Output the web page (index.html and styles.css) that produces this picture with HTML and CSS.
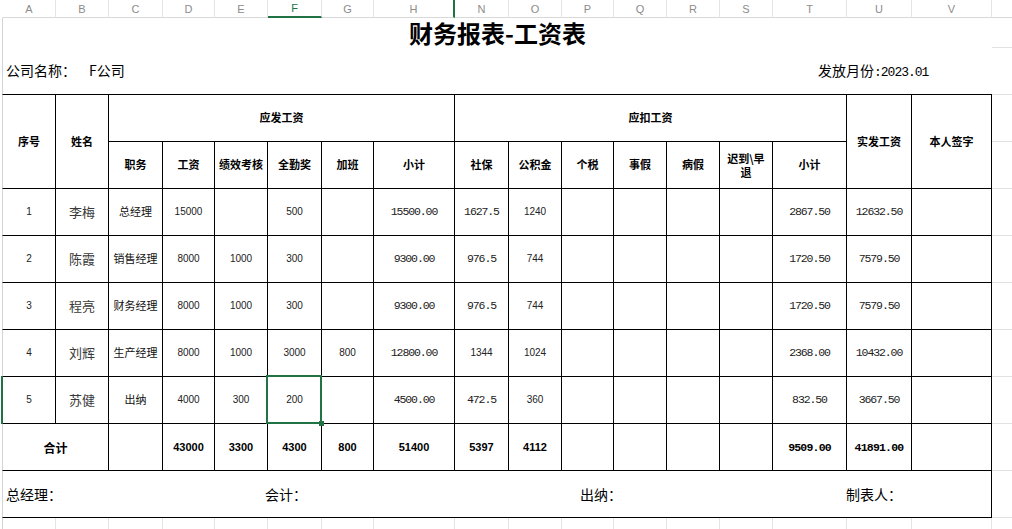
FILE: index.html
```html
<!DOCTYPE html>
<html lang="zh-CN">
<head>
<meta charset="utf-8">
<title>财务报表-工资表</title>
<link rel="stylesheet" href="styles.css">
</head>
<body>
<table class="sheet">
  <colgroup>
    <col class="w54"><col class="w53"><col class="w54"><col class="w52"><col class="w53"><col class="w54"><col class="w52"><col class="w81">
    <col class="w54"><col class="w53"><col class="w52"><col class="w53"><col class="w53"><col class="w53"><col class="w74"><col class="w65"><col class="w80"><col class="wfill">
  </colgroup>
  <thead>
    <tr class="colhead">
      <th class="first">A</th><th>B</th><th>C</th><th>D</th><th>E</th><th class="sel">F</th><th>G</th><th class="hid">H</th>
      <th>N</th><th>O</th><th>P</th><th>Q</th><th>R</th><th>S</th><th>T</th><th>U</th><th>V</th><th class="fill"></th>
    </tr>
  </thead>
  <tbody>
    <tr class="r-title">
      <td colspan="17" class="first title">财务报表-工资表</td><td class="fill"></td>
    </tr>
    <tr class="r-row">
      <td colspan="17" class="first company">
        <div class="meta">
          <span>公司名称：</span><span>F公司</span><span>发放月份<span class="mono">:2023.01</span></span>
        </div>
      </td><td class="fill"></td>
    </tr>
    <tr class="r-row hd">
      <td rowspan="2" class="first k">序号</td>
      <td rowspan="2" class="k">姓名</td>
      <td colspan="6" class="k">应发工资</td>
      <td colspan="7" class="k">应扣工资</td>
      <td rowspan="2" class="k">实发工资</td>
      <td rowspan="2" class="k">本人签字</td>
      <td class="fill"></td>
    </tr>
    <tr class="r-row hd">
      <td class="k">职务</td><td class="k">工资</td><td class="k">绩效考核</td><td class="k">全勤奖</td><td class="k">加班</td><td class="k">小计</td>
      <td class="k">社保</td><td class="k">公积金</td><td class="k">个税</td><td class="k">事假</td><td class="k">病假</td><td class="k wrap">迟到\早<br>退</td><td class="k">小计</td>
      <td class="fill"></td>
    </tr>
    <tr class="r-row">
      <td class="first k n">1</td><td class="k nm">李梅</td><td class="k tx">总经理</td><td class="k n">15000</td><td class="k"></td><td class="k n">500</td><td class="k"></td><td class="k d">15500.00</td>
      <td class="k d">1627.5</td><td class="k n">1240</td><td class="k"></td><td class="k"></td><td class="k"></td><td class="k"></td><td class="k d">2867.50</td><td class="k d">12632.50</td><td class="k"></td>
      <td class="fill"></td>
    </tr>
    <tr class="r-row">
      <td class="first k n">2</td><td class="k nm">陈霞</td><td class="k tx">销售经理</td><td class="k n">8000</td><td class="k n">1000</td><td class="k n">300</td><td class="k"></td><td class="k d">9300.00</td>
      <td class="k d">976.5</td><td class="k n">744</td><td class="k"></td><td class="k"></td><td class="k"></td><td class="k"></td><td class="k d">1720.50</td><td class="k d">7579.50</td><td class="k"></td>
      <td class="fill"></td>
    </tr>
    <tr class="r-row">
      <td class="first k n">3</td><td class="k nm">程亮</td><td class="k tx">财务经理</td><td class="k n">8000</td><td class="k n">1000</td><td class="k n">300</td><td class="k"></td><td class="k d">9300.00</td>
      <td class="k d">976.5</td><td class="k n">744</td><td class="k"></td><td class="k"></td><td class="k"></td><td class="k"></td><td class="k d">1720.50</td><td class="k d">7579.50</td><td class="k"></td>
      <td class="fill"></td>
    </tr>
    <tr class="r-row">
      <td class="first k n">4</td><td class="k nm">刘辉</td><td class="k tx">生产经理</td><td class="k n">8000</td><td class="k n">1000</td><td class="k n">3000</td><td class="k n">800</td><td class="k d">12800.00</td>
      <td class="k n">1344</td><td class="k n">1024</td><td class="k"></td><td class="k"></td><td class="k"></td><td class="k"></td><td class="k d">2368.00</td><td class="k d">10432.00</td><td class="k"></td>
      <td class="fill"></td>
    </tr>
    <tr class="r-row">
      <td class="first k n rowmark">5</td><td class="k nm">苏健</td><td class="k tx">出纳</td><td class="k n">4000</td><td class="k n">300</td><td class="k n cur">200</td><td class="k"></td><td class="k d">4500.00</td>
      <td class="k d">472.5</td><td class="k n">360</td><td class="k"></td><td class="k"></td><td class="k"></td><td class="k"></td><td class="k d">832.50</td><td class="k d">3667.50</td><td class="k"></td>
      <td class="fill"></td>
    </tr>
    <tr class="r-row tot">
      <td colspan="2" class="first k tcj">合计</td><td class="k"></td><td class="k">43000</td><td class="k">3300</td><td class="k">4300</td><td class="k">800</td><td class="k">51400</td>
      <td class="k">5397</td><td class="k">4112</td><td class="k"></td><td class="k"></td><td class="k"></td><td class="k"></td><td class="k td">9509.00</td><td class="k td">41891.00</td><td class="k"></td>
      <td class="fill"></td>
    </tr>
    <tr class="r-row">
      <td colspan="17" class="first k footer">
        <div class="sign">
          <span>总经理：</span><span>会计：</span><span>出纳：</span><span>制表人：</span>
        </div>
      </td>
      <td class="fill"></td>
    </tr>
    <tr class="r-below">
      <td class="first g"></td><td class="g"></td><td class="g"></td><td class="g"></td><td class="g"></td><td class="g"></td><td class="g"></td><td class="g"></td>
      <td class="g"></td><td class="g"></td><td class="g"></td><td class="g"></td><td class="g"></td><td class="g"></td><td class="g"></td><td class="g"></td><td class="g"></td><td></td>
    </tr>
  </tbody>
</table>
</body>
</html>
```

FILE: styles.css
```css
* { box-sizing: border-box; }
html, body { margin: 0; padding: 0; background: #fff; }
body {
  overflow: hidden;
  height: 529px;
  font-family: "Noto Sans CJK SC", "Liberation Sans", sans-serif;
  color: #000;
}

.sheet {
  border-collapse: separate;
  border-spacing: 0;
  table-layout: fixed;
  width: 1010px;
  margin-left: 2px;
}
.w54 { width: 54px; } .w53 { width: 53px; } .w52 { width: 52px; }
.w81 { width: 81px; } .w74 { width: 74px; } .w65 { width: 65px; }
.w80 { width: 80px; } .wfill { width: 20px; }

.sheet td, .sheet th {
  padding: 0 2px;
  text-align: center;
  vertical-align: middle;
  white-space: nowrap;
  font-weight: 400;
  line-height: 1.2;
}

/* column letters */
.colhead th {
  height: 18px;
  font: 400 11px/16px "Liberation Sans", sans-serif;
  color: #8c8c8c;
  border-right: 1px solid #e4e4e4;
  border-bottom: 1px solid #d8d8d8;
}
.colhead th.first { border-left: 1px solid transparent; }
.colhead th.sel { color: #217346; border-bottom: 2px solid #217346; line-height: 15px; }
.colhead th.hid { border-right: 2px solid #217346; }
.colhead th.fill { border-right: none; }

/* rows */
.r-title { height: 30px; }
.r-row { height: 47px; }
.r-below { height: 20px; }

.first { border-left: 1px solid #d4d4d4; }
.fill { border-bottom: 1px solid #e2e2e2; }
.k { border-right: 1px solid #000; border-bottom: 1px solid #000; }
.g { border-right: 1px solid #e4e4e4; }

.sheet td.title {
  font-size: 24px;
  font-weight: 700;
  line-height: 28px;
}

.company {
  border-bottom: 1px solid #000;
  padding-left: 3px !important;
  text-align: left !important;
}
.meta {
  display: grid;
  grid-template-columns: 83px 729px auto;
  font-size: 14px;
  line-height: 18px;
}
.mono {
  font-family: "Liberation Mono", monospace;
  letter-spacing: -1px;
  font-size: 13px;
}

.sheet .hd td { font-size: 11px; font-weight: 700; }
.sheet .hd td.fill { font-weight: 400; }
.sheet .hd td.wrap { line-height: 14px; }

.n { font: 400 10px "Liberation Sans", sans-serif; color: #222; }
.nm { font-size: 13px; color: #3a3a3a; }
.tx { font-size: 11px; color: #111; }
.d {
  font: 400 11.5px "Liberation Mono", monospace;
  letter-spacing: -1.1px;
  color: #222;
}

.sheet .tot td { font: 700 11px "Liberation Sans", sans-serif; }
.sheet .tot td.tcj { font: 700 12px "Noto Sans CJK SC", sans-serif; }
.sheet .tot td.td { font: 700 11.5px "Liberation Mono", monospace; letter-spacing: -0.8px; }

.footer {
  padding-left: 3px !important;
  text-align: left !important;
}
.sign {
  display: grid;
  grid-template-columns: 259px 315px 266px auto;
  font-size: 14px;
  line-height: 18px;
}

/* selection overlay */
.cur { position: relative; }
.cur::after {
  content: "";
  position: absolute;
  left: -2px; top: -2px; right: -1px; bottom: -1px;
  border: 2px solid #217346;
}
.cur::before {
  content: "";
  position: absolute;
  width: 5px; height: 5px;
  right: -3px; bottom: -3px;
  background: #217346;
  z-index: 1;
}
.rowmark { position: relative; }
.rowmark::before {
  content: "";
  position: absolute;
  left: -2px; top: -1px; bottom: -1px;
  width: 2px;
  background: #217346;
}
```
